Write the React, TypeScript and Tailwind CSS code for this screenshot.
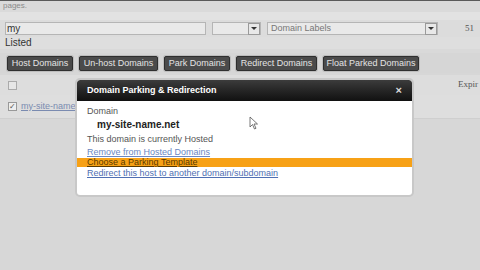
import React from 'react'

const font = { fontFamily: '"Liberation Sans", Arial, sans-serif' };

const ActionButton = ({ label, w }: { label: string; w: string }) => (
    <div className={`${w} h-[15px] flex items-center justify-center rounded-[2px] bg-[#4b4b4b] border border-[#2f2f2f] text-[#e4e4e4] text-[9px] leading-none whitespace-nowrap shadow-[0_0_0_1px_#bdbdbd]`}>
        {label}
    </div>
);

const SelectArrow = () => (
    <div className="w-[12px] h-[12px] border border-[#9a9a9a] bg-[#e8e8e8] flex items-center justify-center">
        <div className="w-0 h-0 border-l-[3px] border-r-[3px] border-t-[3px] border-l-transparent border-r-transparent border-t-[#333]" />
    </div>
);

export default function App() {
    return (
        <div className="w-[480px] h-[270px] overflow-hidden relative bg-[#d7d7d7] text-[#3a3a3a]" style={font}>
            {/* Top strip */}
            <div className="h-[1px] bg-[#5a5a5a]" />
            <div className="h-[11px] bg-[#dadada] px-[3px] text-[8px] leading-[10px] text-[#8a8a8a]">pages.</div>
            <div className="h-[8px] bg-[#e2e2e2]" />

            {/* Filters */}
            <div className="flex items-center h-[17px] bg-[#dcdcdc] pl-[5px]">
                <div className="w-[201px] h-[13px] bg-[#e9e9e9] border border-[#b5b5b5] text-[10px] leading-[11px] pl-[1px] text-[#333]">my</div>
                <div className="ml-[6px] w-[49px] h-[13px] bg-[#e9e9e9] border border-[#b5b5b5] flex justify-end items-center">
                    <SelectArrow />
                </div>
                <div className="ml-[6px] w-[171px] h-[13px] bg-[#e9e9e9] border border-[#b5b5b5] flex items-center justify-between">
                    <span className="text-[9px] leading-none pl-[3px] text-[#777]">Domain Labels</span>
                    <SelectArrow />
                </div>
                <span className="ml-[27px] text-[9px] text-[#555] whitespace-nowrap" style={{ fontFamily: '"Liberation Serif", serif' }}>51</span>
            </div>
            <div className="h-[12px] bg-[#dedede] pl-[5px] text-[10px] leading-[12px] text-[#333]">Listed</div>
            <div className="h-[4px] bg-[#d9d9d9]" />

            {/* Action buttons */}
            <div className="flex items-center gap-[6px] h-[20px] pl-[7px] bg-[#d6d6d6]">
                <ActionButton label="Host Domains" w="w-[66px]" />
                <ActionButton label="Un-host Domains" w="w-[79px]" />
                <ActionButton label="Park Domains" w="w-[66px]" />
                <ActionButton label="Redirect Domains" w="w-[81px]" />
                <ActionButton label="Float Parked Domains" w="w-[96px]" />
            </div>

            {/* Table header */}
            <div className="flex items-center h-[20px] bg-[#dddddd] pl-[8px] mt-[2px]">
                <div className="w-[9px] h-[9px] border border-[#aaaaaa] bg-[#e6e6e6]" />
                <span className="ml-[441px] text-[9px] text-[#555] whitespace-nowrap" style={{ fontFamily: '"Liberation Serif", serif' }}>Expir</span>
            </div>
            {/* Row */}
            <div className="flex items-center h-[24px] bg-[#dedede] pl-[8px] border-b border-[#cfcfcf]">
                <div className="w-[9px] h-[9px] border border-[#999] bg-[#eeeeee] flex items-center justify-center text-[8px] leading-none text-[#555]">✓</div>
                <span className="ml-[4px] text-[9px] text-[#7a8bb0] underline">my-site-name.</span>
            </div>

            {/* Modal */}
            <div className="absolute left-[77px] top-[80px] w-[335px] h-[115px] bg-white rounded-[3px] shadow-[0_0_0_2px_#c8c8c8] overflow-hidden">
                <div className="h-[21px] bg-gradient-to-b from-[#3c3c3c] to-[#111] flex items-center justify-between px-[10px] rounded-t-[3px]">
                    <span className="text-[9px] font-bold text-white">Domain Parking &amp; Redirection</span>
                    <span className="text-[11px] font-bold text-[#dcdcdc] leading-none">×</span>
                </div>
                <div className="pt-[3px] text-[9px] leading-[14px]">
                    <div className="pl-[10px] text-[#555]">Domain</div>
                    <div className="pl-[20px] font-bold text-[10px] text-[#222]">my-site-name.net</div>
                    <div className="pl-[10px] text-[#555]">This domain is currently Hosted</div>
                    <div className="pl-[10px] text-[#6a88c2] underline leading-[12px]">Remove from Hosted Domains</div>
                    <div className="pl-[10px] bg-[#f7a116] text-[#5a3a00] underline leading-[9px] h-[9px]">Choose a Parking Template</div>
                    <div className="pl-[10px] text-[#4f6fb3] underline leading-[12px]">Redirect this host to another domain/subdomain</div>
                </div>
            </div>

            {/* Cursor */}
            <svg className="absolute left-[249px] top-[116px]" width="10" height="14" viewBox="0 0 10 14">
                <path d="M1 1 L1 11 L3.5 8.5 L5.5 13 L7 12.3 L5 8 L8.5 8 Z" fill="white" stroke="#555" strokeWidth="0.8" />
            </svg>
        </div>
    )
}
